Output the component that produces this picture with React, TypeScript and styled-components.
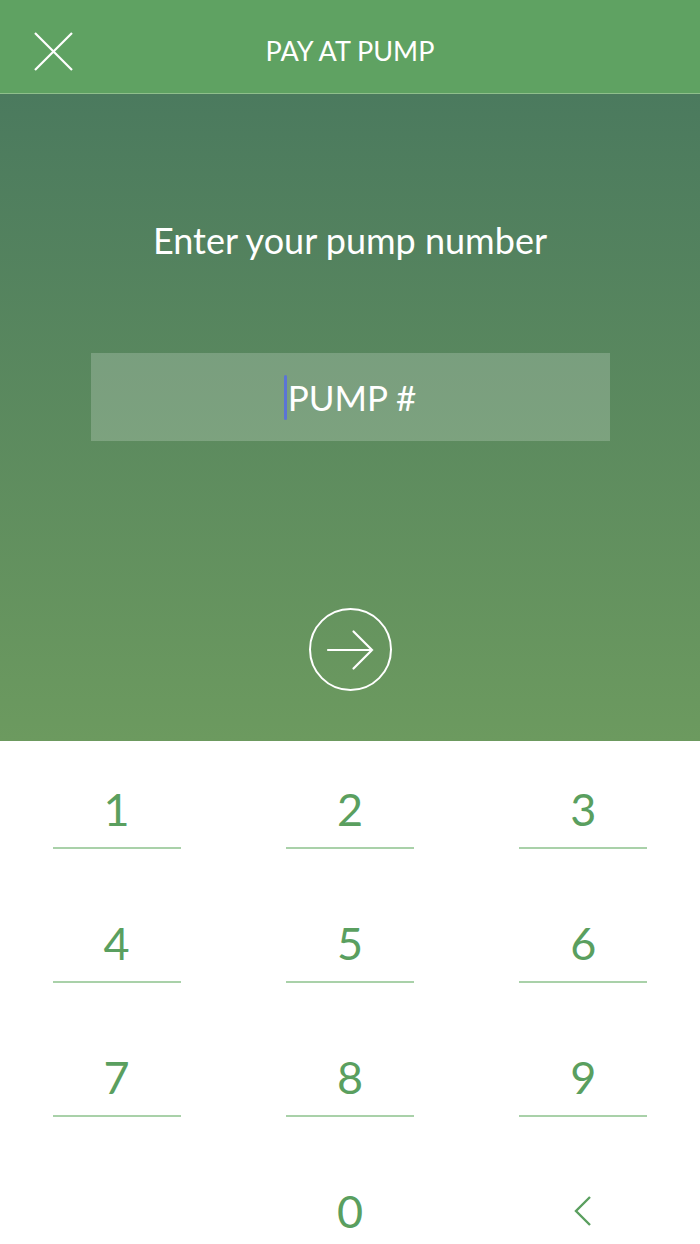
import React, { useState } from 'react'
import styled, { createGlobalStyle } from 'styled-components'

const GlobalStyle = createGlobalStyle`
  html, body {
    margin: 0;
    padding: 0;
    background: #fff;
  }
  body {
    font-family: Lato, 'Open Sans', sans-serif;
  }
`

const Screen = styled.div`
  width: 700px;
  height: 1244px;
  display: flex;
  flex-direction: column;
  overflow: hidden;
`

const Header = styled.header`
  height: 94px;
  box-sizing: border-box;
  padding-top: 8px;
  background: #5fa262;
  border-bottom: 1px solid #8fbf8c;
  display: flex;
  align-items: center;
  justify-content: center;
  position: relative;
  flex-shrink: 0;
`

const CloseButton = styled.button`
  position: absolute;
  left: 33px;
  top: 31px;
  width: 41px;
  height: 41px;
  padding: 0;
  border: none;
  background: none;
  cursor: pointer;
`

const HeaderTitle = styled.h1`
  margin: 0;
  color: #fff;
  font-size: 27px;
  font-weight: 400;
  letter-spacing: 0;
`

const Hero = styled.section`
  height: 647px;
  background: linear-gradient(180deg, #4b7a5e 0%, #6c9a5f 100%);
  display: flex;
  flex-direction: column;
  align-items: center;
  flex-shrink: 0;
`

const Prompt = styled.h2`
  margin: 126px 0 0;
  color: #fff;
  font-size: 36px;
  font-weight: 400;
  line-height: 40px;
`

const PumpInput = styled.div`
  margin-top: 93px;
  width: 519px;
  height: 88px;
  background: rgba(255, 255, 255, 0.2);
  display: flex;
  align-items: center;
  justify-content: center;
`

const Caret = styled.span`
  width: 3px;
  height: 45px;
  border-radius: 2px;
  background: #5b74d6;
  margin-right: 1px;
`

const Placeholder = styled.span`
  color: #fff;
  font-size: 35px;
  line-height: 40px;
`

const GoButton = styled.button`
  margin-top: 167px;
  width: 83px;
  height: 83px;
  border-radius: 50%;
  border: 2px solid #fff;
  background: transparent;
  padding: 0;
  display: flex;
  align-items: center;
  justify-content: center;
  cursor: pointer;
`

const Keypad = styled.div`
  flex: 1;
  background: #fff;
  display: grid;
  grid-template-columns: repeat(3, 1fr);
  grid-auto-rows: 134px;
`

const Key = styled.button<{ $line: boolean }>`
  border: none;
  background: none;
  padding: 43px 0 0;
  display: flex;
  flex-direction: column;
  align-items: center;
  cursor: pointer;
  font-family: inherit;

  &::after {
    content: '';
    display: ${p => (p.$line ? 'block' : 'none')};
    width: 128px;
    height: 1.5px;
    margin-top: 13px;
    background: #a9d1a9;
  }
`

const Digit = styled.span`
  height: 50px;
  line-height: 50px;
  font-size: 45px;
  color: #5a9f5f;
  display: flex;
  align-items: center;
`

const keys = ['1', '2', '3', '4', '5', '6', '7', '8', '9', '', '0', 'back']

export default function App() {
  const [value, setValue] = useState('')

  const press = (k: string) => {
    if (k === 'back') setValue(v => v.slice(0, -1))
    else if (k) setValue(v => v + k)
  }

  return (
    <Screen>
      <GlobalStyle />
      <Header>
        <CloseButton aria-label="Close">
          <svg width="41" height="41" viewBox="0 0 41 41">
            <path d="M2 2 L39 39 M39 2 L2 39" stroke="#fff" strokeWidth="2.2" fill="none" />
          </svg>
        </CloseButton>
        <HeaderTitle>PAY AT PUMP</HeaderTitle>
      </Header>
      <Hero>
        <Prompt>Enter your pump number</Prompt>
        <PumpInput>
          <Caret />
          <Placeholder>{value || 'PUMP #'}</Placeholder>
        </PumpInput>
        <GoButton aria-label="Continue">
          <svg width="48" height="48" viewBox="0 0 48 48">
            <path d="M2 24 H46 M27.5 5.5 L46 24 L27.5 42.5" stroke="#fff" strokeWidth="2.2" fill="none" strokeLinecap="round" />
          </svg>
        </GoButton>
      </Hero>
      <Keypad>
        {keys.map((k, i) => (
          <Key key={i} $line={i < 9} onClick={() => press(k)}>
            <Digit>
              {k === 'back' ? (
                <svg width="20" height="32" viewBox="0 0 20 32">
                  <path d="M17 2 L3 16 L17 30" stroke="#5a9f5f" strokeWidth="2.4" fill="none" />
                </svg>
              ) : (
                k
              )}
            </Digit>
          </Key>
        ))}
      </Keypad>
    </Screen>
  )
}
